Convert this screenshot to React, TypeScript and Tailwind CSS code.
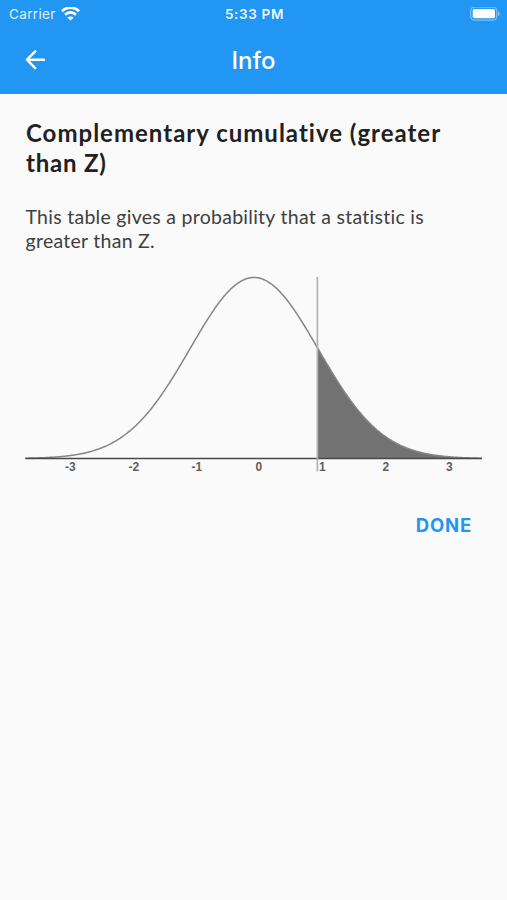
import React from 'react';

// Plot geometry, in svg units
const CENTER = 229;
const SIGMA = 64;
const PEAK = 181;
const BASELINE = 184.5;
const WIDTH = 457;
const CUTOFF = 292;

const curveY = (x: number) => {
  const z = (x - CENTER) / SIGMA;
  return BASELINE - PEAK * Math.exp(-(z * z) / 2);
};

const curvePoints = (from: number, to: number) => {
  const points: string[] = [];
  for (let x = from; x <= to; x += 1) {
    points.push(`${x},${curveY(x).toFixed(2)}`);
  }
  return points.join(' ');
};

const axisLabels = [
  { text: '-3', x: 45 },
  { text: '-2', x: 108.5 },
  { text: '-1', x: 171.5 },
  { text: '0', x: 233.5 },
  { text: '1', x: 297 },
  { text: '2', x: 360.5 },
  { text: '3', x: 424 },
];

const StatusBar: React.FC = () => (
  <div className="grid grid-cols-3 items-center h-7 pl-[9px] pr-[7px] text-[13.5px]">
    <div className="flex items-center gap-[5.5px] text-white/85">
      <span className="tracking-[0.35px]">Carrier</span>
      <svg width="19" height="14" viewBox="0 0 19 14" fill="none" stroke="white" strokeWidth="2.7">
        <path d="M1 4.2a12 12 0 0 1 17 0" />
        <path d="M4.1 7.7a7.6 7.6 0 0 1 10.8 0" />
        <path d="M9.5 13.6 6.4 10.8a4.4 4.4 0 0 1 6.2 0Z" fill="white" stroke="none" />
      </svg>
    </div>
    <span className="text-center font-semibold text-[13.5px] tracking-[0.65px] text-white/95">5:33 PM</span>
    <svg className="justify-self-end" width="30" height="15" viewBox="0 0 30 15">
      <rect x="0.7" y="0.2" width="26" height="13" rx="3.7" fill="none" stroke="white" strokeOpacity="0.4" strokeWidth="1.3" />
      <rect x="2.7" y="2" width="22.3" height="9.3" rx="1.8" fill="white" />
      <path d="M28 4.3c2.2.8 2.2 4 0 4.8Z" fill="white" fillOpacity="0.45" />
    </svg>
  </div>
);

const Header: React.FC = () => (
  <header className="h-[93.5px] bg-[#2196f3] text-white font-[Inter,sans-serif]">
    <StatusBar />
    <div className="grid grid-cols-[1fr_auto_1fr] items-center h-16 px-[25px]">
      <button aria-label="Back" className="w-[21px]">
        <svg
          width="21"
          height="20"
          viewBox="0 0 21 20"
          fill="none"
          stroke="white"
          strokeWidth="2.4"
          strokeLinecap="round"
          strokeLinejoin="round"
        >
          <path d="M19 9.7H2M10.2 1.3 1.9 9.7l8.3 8.4" />
        </svg>
      </button>
      <h1 className="pt-px text-[24px] font-medium leading-8">Info</h1>
    </div>
  </header>
);

const DistributionChart: React.FC = () => (
  <svg className="block w-[457px] h-[200px]" viewBox={`0 0 ${WIDTH} 200`}>
    <polygon
      points={`${CUTOFF + 0.5},${BASELINE} ${curvePoints(CUTOFF + 0.5, WIDTH)} ${WIDTH},${BASELINE}`}
      fill="#727272"
    />
    <polyline points={curvePoints(0, WIDTH)} fill="none" stroke="#858585" strokeWidth="1.5" />
    <line x1="0.5" y1={BASELINE} x2={WIDTH} y2={BASELINE} stroke="#484848" strokeWidth="1.5" />
    <line x1={CUTOFF + 0.4} y1="3" x2={CUTOFF + 0.4} y2="197.5" stroke="#b2b2b2" strokeWidth="1.7" />
    <g className="font-['Liberation_Sans',sans-serif] font-bold text-[12px]" fill="#5e5e5e" textAnchor="middle">
      {axisLabels.map((label) => (
        <text key={label.text} x={label.x + 0.3} y="197">
          {label.text}
        </text>
      ))}
    </g>
  </svg>
);

export default function App() {
  return (
    <div className="min-h-[900px] bg-[#fafafa] font-[Lato,sans-serif]">
      <Header />
      <main className="flex flex-col px-[25px] pt-[24.5px]">
        <h2 className="pl-px text-[24px] font-bold leading-[30px] tracking-[1px] text-[#212121] whitespace-nowrap">
          Complementary cumulative (greater
          <br />
          <span className="tracking-[0.8px]">than Z)</span>
        </h2>
        <p className="mt-[26.5px] pl-[0.5px] text-[19.5px] leading-[24.5px] tracking-[0.27px] text-[#404040] whitespace-nowrap">
          This table gives a probability that a statistic is
          <br />
          greater than Z.
        </p>
        <div className="mt-[20.5px]">
          <DistributionChart />
        </div>
        <button className="self-end mt-[37px] mr-[10px] font-[Inter,sans-serif] text-[18.5px] leading-7 font-bold tracking-[0.8px] text-[#2196f3]">
          DONE
        </button>
      </main>
    </div>
  );
}
